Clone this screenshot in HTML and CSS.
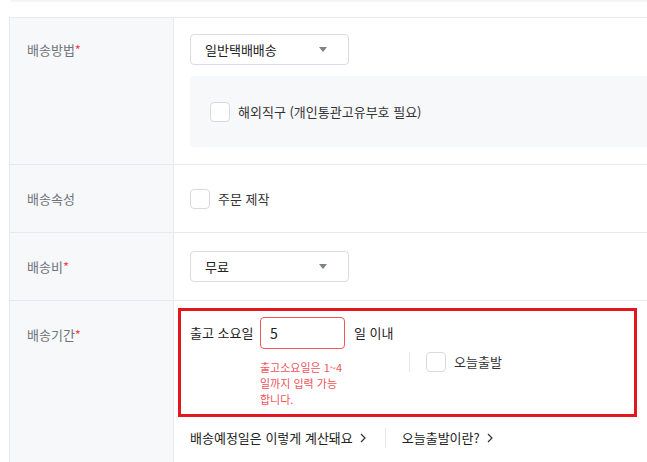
FILE: index.html
```html
<!DOCTYPE html>
<html lang="ko">
<head>
<meta charset="utf-8">
<title>배송 설정</title>
<link rel="stylesheet" href="styles.css">
</head>
<body>
<div class="top-line"></div>
<div class="form">
  <div class="row row-method">
    <div class="label label-top1">배송방법<span class="req">*</span></div>
    <div class="content content-method">
      <div class="select"><span>일반택배배송</span><i class="caret"></i></div>
      <div class="subbox">
        <label class="check"><span class="box"></span><span>해외직구 (개인통관고유부호 필요)</span></label>
      </div>
    </div>
  </div>
  <div class="row row-mid">
    <div class="label label-center">배송속성</div>
    <div class="content content-center">
      <label class="check"><span class="box"></span><span>주문 제작</span></label>
    </div>
  </div>
  <div class="row row-mid">
    <div class="label label-center">배송비<span class="req">*</span></div>
    <div class="content content-center">
      <div class="select"><span>무료</span><i class="caret"></i></div>
    </div>
  </div>
  <div class="row row-period">
    <div class="label label-top4">배송기간<span class="req">*</span></div>
    <div class="content content-period">
      <div class="highlight">
        <div class="period-line">
          <span class="period-label">출고 소요일</span>
          <div class="num-input">5</div>
          <span class="unit">일 이내</span>
        </div>
        <div class="period-sub">
          <div class="error-col">
            <p class="error">출고소요일은 1~4<br>일까지 입력 가능<br>합니다.</p>
          </div>
          <span class="vdivider"></span>
          <label class="check"><span class="box"></span><span>오늘출발</span></label>
        </div>
      </div>
      <div class="links">
        <a class="link">배송예정일은 이렇게 계산돼요<svg class="chev" width="6" height="10" viewBox="0 0 6 10"><path d="M1 1l4 4-4 4" fill="none" stroke="#333" stroke-width="1.2"/></svg></a>
        <span class="ldivider"></span>
        <a class="link">오늘출발이란?<svg class="chev" width="6" height="10" viewBox="0 0 6 10"><path d="M1 1l4 4-4 4" fill="none" stroke="#333" stroke-width="1.2"/></svg></a>
      </div>
    </div>
  </div>
</div>
</body>
</html>
```
FILE: styles.css
```css
* { box-sizing: border-box; }
html, body { margin: 0; padding: 0; background: #fff; overflow: hidden; }
body {
  font-family: "Noto Sans CJK KR", "Noto Sans", sans-serif;
  font-size: 13px;
  line-height: 18px;
  color: #222;
  width: 647px;
  height: 462px;
}
.top-line { height: 2px; margin-left: 11px; background: #f3f4f6; }
.form {
  margin: 15px 0 0 9px;
  border-top: 1px solid #e7e9ec;
  border-left: 1px solid #e7e9ec;
}
.row { display: flex; border-bottom: 1px solid #e7e9ec; }
.label {
  flex: none;
  width: 164px;
  padding-left: 17px;
  background: #f7f8fa;
  border-right: 1px solid #e7e9ec;
  color: #6e737b;
  display: flex;
}
.req { color: #f0474f; }
.label-top1 { padding-top: 23px; }
.label-top4 { padding-top: 25px; }
.label-center { align-items: center; }
.row-mid { height: 68px; }
.row-period { border-bottom: none; height: 170px; }
.content { flex: 1; min-width: 0; }
.content-method { padding: 16px 0 17px 16px; }
.content-center { display: flex; align-items: center; padding-left: 16px; }
.content-period { padding: 7px 10px 0 4px; }

.select {
  width: 159px;
  height: 31px;
  border: 1px solid #d9dce0;
  border-radius: 4px;
  display: flex;
  align-items: center;
  justify-content: space-between;
  padding: 0 21px 0 14px;
  background: #fff;
  color: #222;
}
.caret {
  width: 0; height: 0;
  border-left: 4.5px solid transparent;
  border-right: 4.5px solid transparent;
  border-top: 5px solid #7c828a;
}
.subbox {
  margin-top: 11px;
  height: 71px;
  background: #f7f8fa;
  border-radius: 4px 0 0 4px;
  display: flex;
  align-items: center;
  padding-left: 20px;
}
.check { display: flex; align-items: center; gap: 8px; color: #333; }
.box {
  width: 20px; height: 20px;
  border: 1px solid #d6d9dd;
  border-radius: 4px;
  background: #fff;
  flex: none;
}

.highlight {
  border: 3px solid #e3181e;
  padding: 6px 9px 7px 9px;
}
.period-line { display: flex; align-items: center; height: 32px; }
.period-label { width: 70px; flex: none; }
.num-input {
  width: 85px; height: 32px;
  border: 1px solid #f0555c;
  border-radius: 4px;
  padding-left: 9px;
  display: flex; align-items: center;
  font-size: 14px;
}
.unit { margin-left: 9px; }
.period-sub { display: flex; align-items: flex-start; margin-top: 3px; padding-left: 70px; }
.error-col { width: 149px; flex: none; padding-top: 7px; }
.error { margin: 0; font-size: 11px; line-height: 16px; color: #f2535b; }
.vdivider { width: 1px; height: 20px; background: #e5e7eb; margin-right: 16px; flex: none; }

.links { display: flex; align-items: center; height: 20px; margin: 11px 0 0 12px; }
.link { color: #222; display: flex; align-items: center; }
.chev { margin-left: 7px; }
.ldivider { width: 1px; height: 20px; background: #e5e7eb; margin: 0 16px 0 19px; }
```
